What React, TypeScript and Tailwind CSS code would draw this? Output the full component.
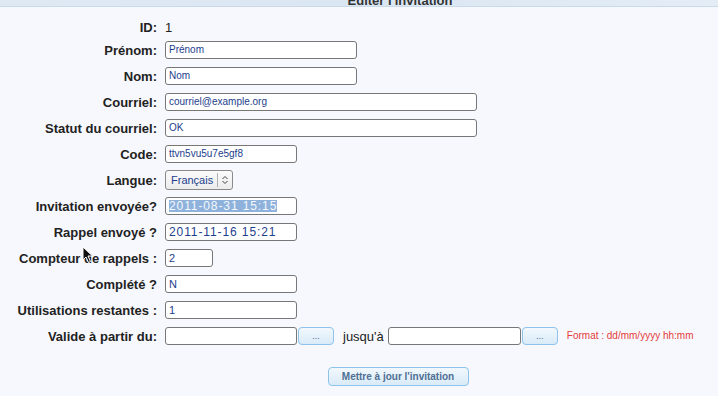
import React from "react";

const labelCls =
  "w-[157px] shrink-0 text-right text-[13px] font-bold leading-none text-[#222]";
const inputCls =
  "h-[18px] rounded-[3px] border border-[#777] bg-white px-[3px] text-[10px] leading-none text-[#1c3e8c] outline-none";
const dotsBtn =
  "h-[18px] w-[36px] rounded-[4px] border border-[#8cc4ec] bg-gradient-to-b from-[#f2f8fd] to-[#d9ebf8] text-[9px] leading-none text-[#4a6a90]";

function Row({
  label,
  children,
}: {
  label: string;
  children: React.ReactNode;
}) {
  return (
    <div className="flex h-[26px] items-center gap-2">
      <div className={labelCls}>{label}</div>
      <div className="flex items-center">{children}</div>
    </div>
  );
}

function Field({
  value,
  w,
  focused,
  text = "",
}: {
  value: string;
  w: string;
  focused?: boolean;
  text?: string;
}) {
  return (
    <div
      className={`${inputCls} ${w} ${text} flex items-center ${
        focused ? "border-[#5a8cc4]" : ""
      }`}
    >
      {focused ? (
        <span className="bg-[#8eb2db] text-[#f4f8fc]">{value}</span>
      ) : (
        <span>{value}</span>
      )}
    </div>
  );
}

function Pointer() {
  return (
    <svg
      className="absolute left-[82px] top-[246px]"
      width="12"
      height="18"
      viewBox="0 0 12 18"
    >
      <path
        d="M1 1 L1 14 L4 11 L6.5 16.5 L8.5 15.5 L6 10 L10.5 10 Z"
        fill="#111"
        stroke="#fff"
        strokeWidth="1"
      />
    </svg>
  );
}

export default function App() {
  return (
    <div className="relative h-[396px] w-[718px] overflow-hidden bg-[#f7f8fd] font-['Liberation_Sans',Arial,sans-serif]">
      <div className="relative h-[7px] overflow-hidden border-b border-[#c9dbeb] bg-gradient-to-r from-[#dfe9f4] via-[#dae6f2] to-[#e4edf6]">
        <div className="absolute left-0 right-0 top-[-6px] pl-[82px] text-center text-[13px] font-bold leading-none text-[#333]">
          Éditer l'invitation
        </div>
      </div>

      <div className="pt-[10px]">
        <div className="flex h-[20px] items-center gap-2">
          <div className={labelCls}>ID:</div>
          <div className="text-[13px] leading-none text-[#222]">1</div>
        </div>
        <Row label="Prénom:">
          <Field value="Prénom" w="w-[192px]" />
        </Row>
        <Row label="Nom:">
          <Field value="Nom" w="w-[192px]" />
        </Row>
        <Row label="Courriel:">
          <Field value="courriel@example.org" w="w-[312px]" />
        </Row>
        <Row label="Statut du courriel:">
          <Field value="OK" w="w-[312px]" />
        </Row>
        <Row label="Code:">
          <Field value="ttvn5vu5u7e5gf8" w="w-[132px]" text="text-[10.5px]" />
        </Row>
        <Row label="Langue:">
          <div className="flex h-[20px] w-[68px] items-center rounded-[3px] border border-[#8a8a8a] bg-gradient-to-b from-[#fbfbfb] to-[#ececec] text-[11px] leading-none text-[#1c3e8c]">
            <span className="pl-[5px] pr-[4px]">Français</span>
            <span className="h-[14px] border-l border-[#b0b0b0]" />
            <svg width="12" height="12" viewBox="0 0 12 12" className="ml-[1px]">
              <path
                d="M3.5 5 L6 2.5 L8.5 5 M3.5 7 L6 9.5 L8.5 7"
                fill="none"
                stroke="#444"
                strokeWidth="1"
              />
            </svg>
          </div>
        </Row>
        <Row label="Invitation envoyée?">
          <Field
            value="2011-08-31 15:15"
            w="w-[132px]"
            text="text-[12px] tracking-[0.9px]"
            focused
          />
        </Row>
        <Row label="Rappel envoyé ?">
          <Field
            value="2011-11-16 15:21"
            w="w-[132px]"
            text="text-[12px] tracking-[0.9px]"
          />
        </Row>
        <Row label="Compteur de rappels :">
          <Field value="2" w="w-[48px]" text="text-[11px]" />
        </Row>
        <Row label="Complété ?">
          <Field value="N" w="w-[132px]" text="text-[11px]" />
        </Row>
        <Row label="Utilisations restantes :">
          <Field value="1" w="w-[132px]" text="text-[11px]" />
        </Row>
        <Row label="Valide à partir du:">
          <Field value="" w="w-[132px]" />
          <button className={`${dotsBtn} ml-[1px]`}>...</button>
          <span className="ml-[9px] mr-[4px] text-[13px] leading-none text-[#222]">
            jusqu'à
          </span>
          <Field value="" w="w-[133px]" />
          <button className={`${dotsBtn} ml-[1px]`}>...</button>
          <span className="ml-[9px] text-[10px] leading-none text-[#e53b3b]">
            Format : dd/mm/yyyy hh:mm
          </span>
        </Row>

        <div className="mt-[18px] flex justify-center pl-[78px]">
          <button className="h-[19px] w-[141px] rounded-[4px] border border-[#8cc4ec] bg-gradient-to-b from-[#f2f8fd] to-[#d9ebf8] text-[10px] font-bold leading-none text-[#4f6f94]">
            Mettre à jour l'invitation
          </button>
        </div>
      </div>

      <Pointer />
    </div>
  );
}
